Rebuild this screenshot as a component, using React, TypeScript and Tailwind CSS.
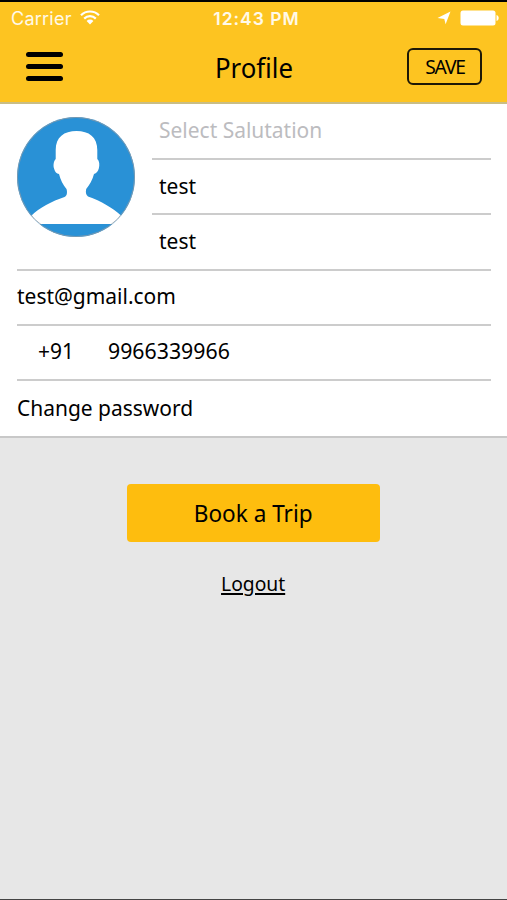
import type { ReactNode } from "react";

function StatusBar() {
  return (
    <div className="grid h-[32px] grid-cols-3 items-center pl-[11px] pr-[8px] font-[Inter,sans-serif] text-[18px] leading-none text-white/90">
      <div className="mt-[2px] flex items-center gap-[8px]">
        <span className="tracking-[0.25px]">Carrier</span>
        <svg width="20" height="15" viewBox="0 0 20 15" fill="none" stroke="#fff" strokeWidth="2.2" className="-mt-[3px]">
          <path d="M1 5.3a12.6 12.6 0 0 1 18 0" />
          <path d="M4.2 8.6a8.2 8.2 0 0 1 11.6 0" />
          <path d="M10 14.4 6.600 11a4.800 4.800 0 0 1 6.800 0Z" fill="#fff" stroke="none" />
        </svg>
      </div>
      <span className="mt-[2px] ml-[3px] text-center text-[17.500px] font-semibold tracking-[1px] whitespace-nowrap">12:43 PM</span>
      <div className="flex items-center justify-end gap-[9px]">
        <svg width="14" height="14" viewBox="0 0 14 14" fill="#fff">
          <path d="M13.500.5 8.600 13.200 7.300 7.900.5 7Z" />
        </svg>
        <svg width="39" height="16" viewBox="0 0 39 16" fill="#fff">
          <rect x="0.500" y="0.500" width="35" height="15" rx="2.500" />
          <path d="M36.500 5c1.600.5 2.200 1.700 2.200 3s-.6 2.500-2.200 3Z" />
        </svg>
      </div>
    </div>
  );
}

function Header() {
  return (
    <header className="h-[104px] border-t-2 border-b-2 border-t-black border-b-[#c9bd85] bg-[#fdc421]">
      <StatusBar />
      <div className="grid h-[64px] grid-cols-3 items-center pl-[26px] pr-[25px]">
        <button aria-label="Menu" className="flex w-[37px] flex-col gap-[7px]">
          <span className="h-[5px] rounded-full bg-black" />
          <span className="h-[5px] rounded-full bg-black" />
          <span className="h-[5px] rounded-full bg-black" />
        </button>
        <h1 className="scale-x-[0.955] pt-[2px] text-center text-[27px] leading-none">Profile</h1>
        <button className="h-[37px] w-[75px] justify-self-end rounded-[6px] border-2 border-[#1d1806] pl-[2px] text-[20.500px] leading-none">
          <span className="inline-block scale-x-[0.940] tracking-[-1.300px]">SAVE</span>
        </button>
      </div>
    </header>
  );
}

function Avatar() {
  return (
    <svg width="118" height="120" viewBox="0 0 118 120" className="mt-[13px] shrink-0">
      <defs>
        <clipPath id="disc">
          <ellipse cx="59" cy="60" rx="59" ry="60" />
        </clipPath>
      </defs>
      <g clipPath="url(#disc)">
        <rect width="118" height="120" fill="#2991d6" />
        <path
          fill="#fff"
          d="M59.500 14C47 14 38.700 20 38.700 33V42C36.500 44 36 49 37.200 52C38 55 39.500 56.500 42 57C43.500 63 46 68 49.500 72C50.500 75.500 50 79 47.500 80C35 84 22 91 14.500 98.500L12 107H107L104 98.500C96 91 84 84 71 79.500C68.800 78 68.500 75 69.200 72C72.500 68 75.500 63 77 57C79.500 56 81 54.500 81.800 51.500C82.800 48 82.500 44 80.300 42V33C80.300 20 72 14 59.500 14Z"
        />
      </g>
      <ellipse cx="59" cy="60" rx="58.600" ry="59.600" fill="none" stroke="#8d9ba6" strokeWidth="0.800" />
    </svg>
  );
}

function Label({ children }: { children: ReactNode }) {
  return <span className="inline-block origin-left scale-x-[0.953]">{children}</span>;
}

function Row({ children, className = "" }: { children: ReactNode; className?: string }) {
  return (
    <div className={`flex items-center border-b-2 border-[#cccccc] text-[22px] leading-none ${className}`}>
      {children}
    </div>
  );
}

export default function App() {
  return (
    <div className="flex h-[900px] w-[507px] flex-col overflow-hidden border-b border-[#444] bg-[#e7e7e7] font-['Noto_Sans','Open_Sans',sans-serif] text-black">
      <Header />
      <main className="h-[334px] border-b-2 border-[#c8c8c8] bg-white pr-[16px] pl-[17px]">
        <div className="flex h-[165px]">
          <Avatar />
          <div className="ml-[17px] flex-1">
            <Row className="h-[56px] pb-[4px] pl-[7px] text-[#bcbcbf]">
              <Label>Select Salutation</Label>
            </Row>
            <Row className="h-[55px] pb-[4px] pl-[7px]">
              <Label>test</Label>
            </Row>
            <div className="flex h-[54px] items-center pb-[4px] pl-[7px] text-[22px] leading-none">
              <Label>test</Label>
            </div>
          </div>
        </div>
        <div className="h-[2px] bg-[#cccccc]" />
        <Row className="h-[55px] pb-[5px]">
          <Label>test@gmail.com</Label>
        </Row>
        <Row className="h-[55px] pb-[5px]">
          <span className="ml-[21px] w-[70px]">
            <Label>+91</Label>
          </span>
          <span className="origin-left scale-x-[0.968]">9966339966</span>
        </Row>
        <div className="flex h-[55px] items-center pb-[3px] text-[22px] leading-none">
          <Label>Change password</Label>
        </div>
      </main>
      <div className="flex flex-col items-center pt-[46px]">
        <button className="h-[58px] w-[253px] rounded-[4px] bg-[#febd0e] text-[24px] leading-none">
          <span className="inline-block scale-x-[0.940]">Book a Trip</span>
        </button>
        <a className="mt-[31px] scale-x-[0.940] text-[20.500px] leading-none underline decoration-2 underline-offset-[2px]">
          Logout
        </a>
      </div>
    </div>
  );
}
